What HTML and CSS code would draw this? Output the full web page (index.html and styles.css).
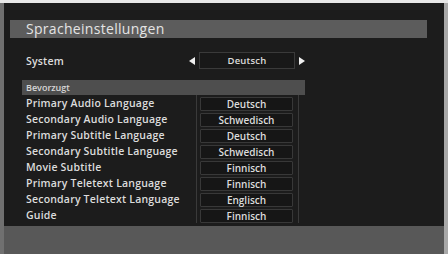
FILE: index.html
```html
<!DOCTYPE html>
<html>
<head>
<meta charset="utf-8">
<link rel="stylesheet" href="styles.css">
</head>
<body>
<div class="screen">
  <div class="panel">
    <div class="title">Spracheinstellungen</div>
    <div class="system">
      <span class="label">System</span>
      <span class="arrow left"></span>
      <span class="sysbox">Deutsch</span>
      <span class="arrow right"></span>
    </div>
    <div class="section">Bevorzugt</div>
    <div class="list">
      <div class="labels">
        <div class="row">Primary Audio Language</div>
        <div class="row">Secondary Audio Language</div>
        <div class="row">Primary Subtitle Language</div>
        <div class="row">Secondary Subtitle Language</div>
        <div class="row">Movie Subtitle</div>
        <div class="row">Primary Teletext Language</div>
        <div class="row">Secondary Teletext Language</div>
        <div class="row">Guide</div>
      </div>
      <div class="values">
        <div class="val">Deutsch</div>
        <div class="val">Schwedisch</div>
        <div class="val">Deutsch</div>
        <div class="val">Schwedisch</div>
        <div class="val">Finnisch</div>
        <div class="val">Finnisch</div>
        <div class="val">Englisch</div>
        <div class="val">Finnisch</div>
      </div>
    </div>
  </div>
  <div class="footer"></div>
</div>
</body>
</html>
```
FILE: styles.css
```css
html, body {
  margin: 0;
  padding: 0;
  width: 448px;
  height: 254px;
  overflow: hidden;
  background: #e8e8e8;
}
.screen {
  margin-top: 3px;
  height: 251px;
  border-left: 4px solid #707070;
  border-right: 4px solid #a8a8a8;
  display: flex;
  flex-direction: column;
  font-family: "Open Sans", "DejaVu Sans", sans-serif;
  color: #dcdcdc;
}
.panel {
  height: 223px;
  background: #1c1c1c;
  display: flex;
  flex-direction: column;
}
.title {
  margin: 17px 17px 0 6px;
  height: 18px;
  background: #5c5c5c;
  padding-left: 16px;
  font-size: 14px;
  line-height: 18px;
  color: #e4e4e4;
  letter-spacing: 0.3px;
}
.system {
  margin-top: 14px;
  height: 17px;
  display: flex;
  align-items: center;
  font-size: 10.5px;
  font-weight: 600;
  letter-spacing: 0.2px;
}
.system .label {
  margin-left: 22px;
  width: 163px;
}
.arrow {
  width: 0;
  height: 0;
  border-top: 4px solid transparent;
  border-bottom: 4px solid transparent;
}
.arrow.left {
  border-right: 6px solid #f0f0f0;
}
.arrow.right {
  border-left: 6px solid #f0f0f0;
}
.sysbox {
  width: 94px;
  height: 15px;
  margin: 0 4px 0 4px;
  border: 1px solid #3a3a3a;
  background: #181818;
  text-align: center;
  line-height: 15px;
  font-size: 9.5px;
  font-weight: 600;
}
.section {
  margin: 11px 0 0 18px;
  width: 279px;
  height: 15px;
  background: #4e4e4e;
  padding-left: 4px;
  font-size: 9px;
  font-weight: 600;
  line-height: 15px;
  color: #d6d6d6;
}
.list {
  margin-left: 18px;
  display: flex;
}
.labels {
  width: 174px;
  border-right: 1px solid #3a3a3a;
}
.row {
  height: 16px;
  line-height: 16px;
  padding-left: 4px;
  font-size: 10.5px;
  font-weight: 600;
  white-space: nowrap;
  letter-spacing: 0.2px;
}
.values {
  width: 98px;
  padding: 0 0 0 3px;
  border-right: 1px solid #3a3a3a;
}
.val {
  height: 14px;
  margin-top: 2px;
  width: 93px;
  background: #161616;
  border: 1px solid #383838;
  box-sizing: border-box;
  border-radius: 1px;
  text-align: center;
  line-height: 12px;
  font-size: 10px;
  font-weight: 600;
}
.footer {
  flex: 1;
  background: #585858;
}
```
